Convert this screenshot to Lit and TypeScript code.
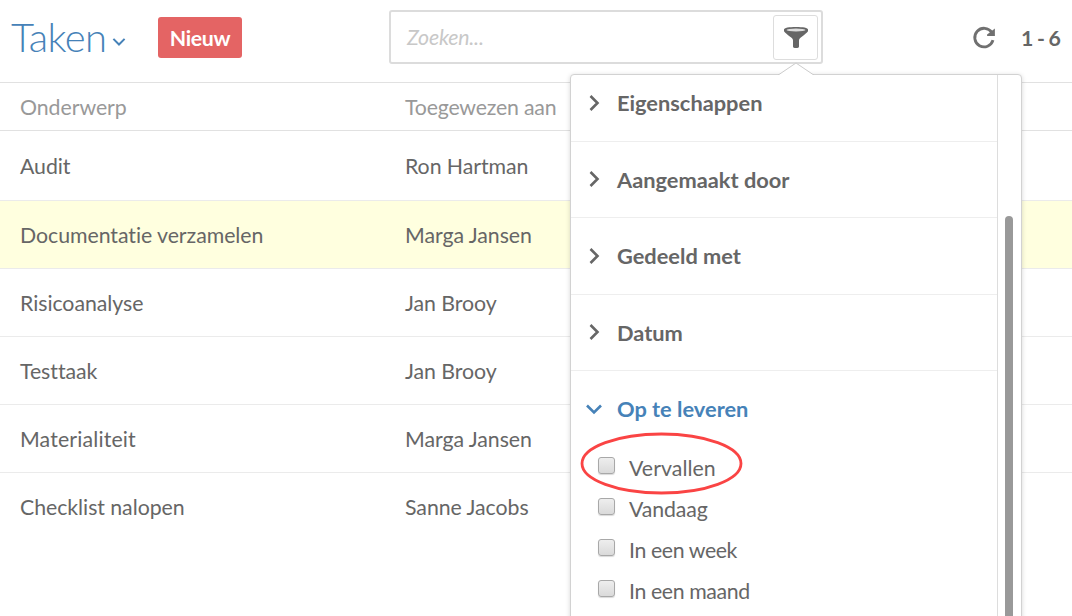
import { LitElement, html, css, svg } from "lit";
import { customElement, property } from "lit/decorators.js";
import { classMap } from "lit/directives/class-map.js";

const TASKS = [
  { subject: "Audit", assignee: "Ron Hartman" },
  { subject: "Documentatie verzamelen", assignee: "Marga Jansen", active: true },
  { subject: "Risicoanalyse", assignee: "Jan Brooy" },
  { subject: "Testtaak", assignee: "Jan Brooy" },
  { subject: "Materialiteit", assignee: "Marga Jansen", wide: true },
  { subject: "Checklist nalopen", assignee: "Sanne Jacobs" },
];

const GROUPS = ["Eigenschappen", "Aangemaakt door", "Gedeeld met", "Datum"];
const DUE = ["Vervallen", "Vandaag", "In een week", "In een maand"];

@customElement("task-header")
class TaskHeader extends LitElement {
  static styles = css`
    :host { display: flex; box-sizing: border-box; height: 83px; border-bottom: 1px solid #e1e1e1; padding-left: 11px; color: #666; }
    .title { width: 147px; display: flex; color: #4682b8; font-size: 40px; font-weight: 300; letter-spacing: -0.6px; line-height: 48px; padding-top: 13px; box-sizing: border-box; }
    .title svg { margin: 24px 0 0 6px; }
    .new { box-sizing: border-box; width: 84px; height: 41px; margin: 17px 147px 0 0; border-radius: 3px; background: #e46464; color: #fff; font-size: 21.3px; font-weight: 700; letter-spacing: -0.35px; line-height: 42px; text-align: center; }
    .search { box-sizing: border-box; width: 434px; height: 54px; margin-top: 10px; border: 2px solid #dcdcdc; border-radius: 3px; display: flex; justify-content: space-between; padding: 3px 3px 0 16px; font-size: 21.3px; font-style: italic; letter-spacing: -0.2px; line-height: 44px; color: #c8c8c8; }
    .filter { box-sizing: border-box; width: 45px; height: 45px; border: 1px solid #ddd; border-radius: 3px; }
    .filter svg { display: block; margin: 10px 0 0 9px; }
    .refresh { margin: 26px 0 0 149px; }
    .count { margin: 24px 0 0 25px; font-size: 21.3px; font-weight: 700; letter-spacing: -0.8px; line-height: 28px; white-space: nowrap; }
  `;
  render() {
    return html`
      <div class="title">Taken<svg width="14" height="10" viewBox="0 0 14 10" fill="none" stroke="#4682b8" stroke-width="2"><path d="M1.400 1.900 7 7.500 12.600 1.900" /></svg></div>
      <div class="new">Nieuw</div>
      <div class="search"><span>Zoeken...</span>
        <div class="filter"><svg width="26" height="24" viewBox="0 0 26 24"><path fill="#666" d="M1 3.500C1 1.800 6 1 13 1s12 .8 12 2.500v1.500c0 1.200-3.500 3.500-7.200 6.500-1.300 1-1.800 1.800-1.800 3V20.500c0 1.200-1.200 1.500-3 1.500s-3-.3-3-1.500v-6c0-1.200-.5-2-1.800-3C4.500 8.500 1 6.200 1 5Z" /><ellipse cx="13" cy="4" rx="9.500" ry="1.500" fill="#ddd" /></svg></div>
      </div>
      <svg class="refresh" width="24" height="24" viewBox="0 0 24 24"><path d="M19.800 6.400A9.300 9.300 0 1 0 21 14.200" fill="none" stroke="#707070" stroke-width="2.800" /><path d="M22.900 2.500V10h-7.800V8.500Z" fill="#707070" /></svg>
      <div class="count">1 - 6</div>
    `;
  }
}

@customElement("task-table")
class TaskTable extends LitElement {
  static styles = css`
    :host { display: block; color: #666; font-size: 21.3px; }
    .row { box-sizing: border-box; display: grid; grid-template-columns: 385px 1fr; height: 68px; padding-left: 20px; line-height: 69px; border-bottom: 1px solid #ebebeb; white-space: nowrap; letter-spacing: -0.05px; }
    .row.head { height: 48px; line-height: 49px; color: #999; border-color: #e1e1e1; }
    .row.head .assignee { letter-spacing: -0.2px; }
    .row.wide .subject { letter-spacing: 0.15px; }
    .row.first { height: 70px; line-height: 71px; }
    .row.active { background: #ffffdf; }
    .row.last { border: 0; }
  `;
  render() {
    return html`
      <div class="row head"><span>Onderwerp</span><span class="assignee">Toegewezen aan</span></div>
      ${TASKS.map((t, i) => html`<div class=${classMap({ row: true, first: i === 0, active: !!t.active, wide: !!t.wide, last: i === TASKS.length - 1 })}><span class="subject">${t.subject}</span><span>${t.assignee}</span></div>`)}
    `;
  }
}

@customElement("filter-group")
class FilterGroup extends LitElement {
  @property() label = "";
  @property({ type: Boolean, reflect: true }) open = false;
  static styles = css`
    :host { box-sizing: border-box; display: flex; align-items: flex-start; height: 76.600px; border-bottom: 1px solid #eee; padding: 24px 0 0 14px; color: #666; font-size: 21.8px; font-weight: 700; line-height: 28px; }
    :host([open]) { border: 0; height: 76px; color: #4682b8; }
    svg { width: 18px; height: 18px; margin: 4.500px 14px 0 0; }
  `;
  render() {
    const d = this.open ? "M2 5.500 9 12.500 16 5.500" : "M5.500 2 12.500 9 5.500 16";
    return html`<svg viewBox="0 0 18 18" fill="none" stroke="currentColor" stroke-width="2.600">${svg`<path d=${d} />`}</svg><span>${this.label}</span>`;
  }
}

@customElement("filter-menu")
class FilterMenu extends LitElement {
  static styles = css`
    :host { position: absolute; left: 570px; top: 74px; box-sizing: border-box; width: 452px; height: 560px; border: 1px solid #d2d2d2; border-radius: 4px; background: #fff; box-shadow: 0 1px 5px rgba(0, 0, 0, 0.16); display: flex; }
    .arrow { position: absolute; left: 206px; top: -13px; }
    .content { box-sizing: border-box; width: 427px; border-right: 1px solid #ddd; }
    .groups { margin-top: -10px; }
    .option { display: flex; height: 41px; padding-left: 27px; color: #666; font-size: 21.3px; letter-spacing: -0.4px; line-height: 28px; }
    .option:nth-child(1) { letter-spacing: 0.05px; }
    .option:nth-child(2) { letter-spacing: -0.1px; }
    .options { margin-top: 7px; }
    .box { box-sizing: border-box; width: 17px; height: 17px; margin: 3px 14px 0 0; border: 1px solid #a8a8a8; border-radius: 3px; background: linear-gradient(#eee, #dadada); box-shadow: 0 1px 1px rgba(0, 0, 0, 0.15); }
    .bar { width: 8px; height: 500px; margin: 141px 0 0 7px; border-radius: 4px; background: #999; }
    .mark { position: absolute; left: 9px; top: 356px; }
  `;
  render() {
    return html`
      <svg class="arrow" width="38" height="14" viewBox="0 0 38 14"><path d="M1 14 2 12.500 19 1 36 12.500 37 14Z" fill="#fff" /><path d="M1 12.500H2L19 1 36 12.500H37" fill="none" stroke="#ccc" /></svg>
      <div class="content">
        <div class="groups">${GROUPS.map((g) => html`<filter-group label=${g}></filter-group>`)}<filter-group open label="Op te leveren"></filter-group></div>
        <div class="options">${DUE.map((d) => html`<div class="option"><span class="box"></span><span>${d}</span></div>`)}</div>
      </div>
      <div class="bar"></div>
      <svg class="mark" width="164" height="64" viewBox="0 0 164 64"><ellipse cx="81.500" cy="32.500" rx="79.500" ry="29.500" fill="none" stroke="#fa4444" stroke-width="2.800" /></svg>
    `;
  }
}

@customElement("app-root")
class AppRoot extends LitElement {
  static styles = css`
    :host { display: block; position: relative; height: 616px; overflow: hidden; background: #fff; font-family: Lato, "Liberation Sans", sans-serif; font-variant-ligatures: none; }
  `;
  render() {
    return html`<task-header></task-header><task-table></task-table><filter-menu></filter-menu>`;
  }
}
